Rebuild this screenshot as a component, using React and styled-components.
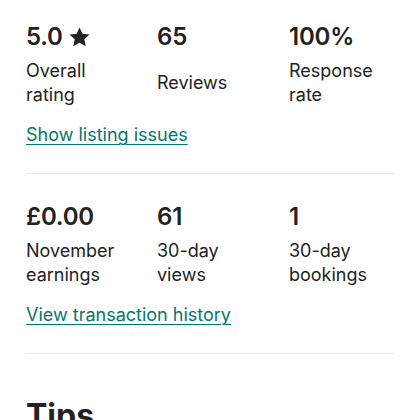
import React from 'react';
import styled, { createGlobalStyle } from 'styled-components';

const GlobalStyle = createGlobalStyle`
  body {
    margin: 0;
    background: #ffffff;
    font-family: Inter, "Noto Sans", sans-serif;
    color: #222222;
  }
`;

const Page = styled.div`
  width: 420px;
  height: 420px;
  overflow: hidden;
  padding: 0 26px;
  box-sizing: border-box;
`;

const Section = styled.section`
  padding: ${({ $first }) => ($first ? '23px' : '29px')} 0 26px;
  border-bottom: 1px solid #ebebeb;
`;

const StatGrid = styled.div`
  display: grid;
  grid-template-columns: 131px 132px 1fr;
`;

const Stat = styled.div`
  display: flex;
  flex-direction: column;
  gap: 8px;
`;

const Value = styled.div`
  display: flex;
  align-items: center;
  gap: 6px;
  font-size: 24px;
  line-height: 28px;
  font-weight: 600;
  letter-spacing: -0.2px;
`;

const Label = styled.div`
  display: flex;
  align-items: center;
  max-width: 100px;
  min-height: 48px;
  font-size: 18px;
  line-height: 24px;
  font-weight: 400;
`;

const Link = styled.a`
  display: inline-block;
  margin-top: 16px;
  font-size: 18px;
  line-height: 24px;
  color: #00786f;
  text-decoration: underline;
  text-underline-offset: 3px;
  text-decoration-thickness: 1px;
`;

const Heading = styled.h2`
  margin: 44px 0 0;
  font-size: 32px;
  line-height: 36px;
  font-weight: 700;
`;

const Star = () => (
  <svg width="21" height="20" viewBox="0 0 24 23" fill="#222222">
    <path d="M12 0.5l3.4 7.3 8.1 0.9-6 5.4 1.7 8L12 18l-7.2 4.1 1.7-8-6-5.4 8.1-0.9z" />
  </svg>
);

const sections = [
  {
    stats: [
      { value: '5.0', star: true, label: 'Overall rating' },
      { value: '65', label: 'Reviews' },
      { value: '100%', label: 'Response rate' },
    ],
    link: 'Show listing issues',
  },
  {
    stats: [
      { value: '£0.00', label: 'November earnings' },
      { value: '61', label: '30-day views' },
      { value: '1', label: '30-day bookings' },
    ],
    link: 'View transaction history',
  },
];

const App = () => (
  <>
    <GlobalStyle />
    <Page>
      {sections.map((section, i) => (
        <Section key={i} $first={i === 0}>
          <StatGrid>
            {section.stats.map((stat) => (
              <Stat key={stat.label}>
                <Value>
                  {stat.value}
                  {stat.star && <Star />}
                </Value>
                <Label>{stat.label}</Label>
              </Stat>
            ))}
          </StatGrid>
          <Link href="#">{section.link}</Link>
        </Section>
      ))}
      <Heading>Tips</Heading>
    </Page>
  </>
);

export default App;
